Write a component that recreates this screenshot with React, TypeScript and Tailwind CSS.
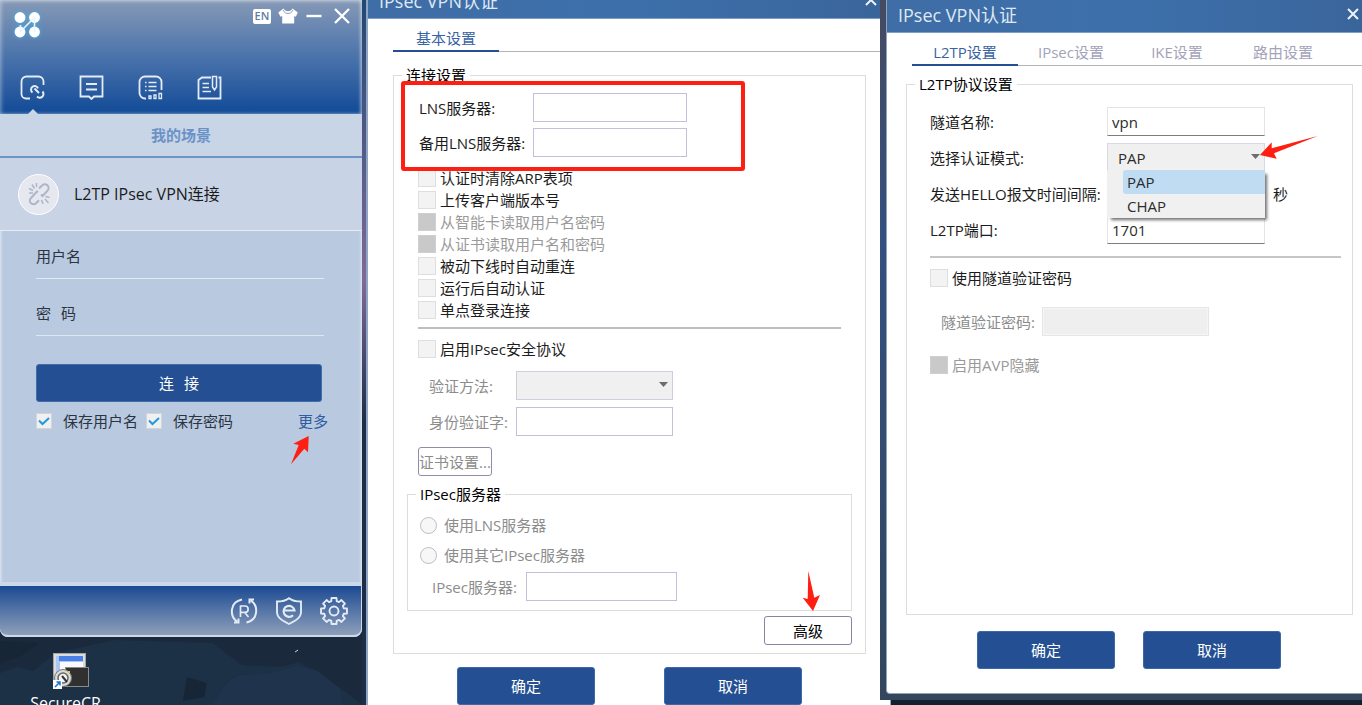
import { useId, type ReactNode } from 'react';

function Check({ label, disabled }: { label: string; disabled?: boolean }) {
  return (
    <label className={`flex h-[22px] items-center gap-1 ${disabled ? 'text-[#9a9a9a]' : 'text-[#1c1c1c]'}`}>
      <input
        type="checkbox"
        disabled={disabled}
        className="size-[18px] shrink-0 appearance-none border border-[#dedede] bg-[#f3f3f3] disabled:border-[#cfcfcf] disabled:bg-[#c9c9c9]"
      />
      {label}
    </label>
  );
}

function Field({
  label,
  labelClass,
  inputClass,
  value,
  disabled,
}: {
  label: string;
  labelClass: string;
  inputClass: string;
  value?: string;
  disabled?: boolean;
}) {
  const id = useId();
  return (
    <div className="flex h-[29px] items-center">
      <label htmlFor={id} className={`shrink-0 whitespace-nowrap ${labelClass}`}>
        {label}
      </label>
      <input id={id} type="text" defaultValue={value} disabled={disabled} className={`h-[29px] min-w-0 ${inputClass}`} />
    </div>
  );
}

function Group({ title, className, children }: { title: string; className: string; children: ReactNode }) {
  return (
    <fieldset className={`min-w-0 border border-[#dddddd] ${className}`}>
      <legend className="ml-2 px-1 leading-5 text-black">{title}</legend>
      {children}
    </fieldset>
  );
}

function TitleBar() {
  return (
    <div className="flex h-[33px] shrink-0 items-center justify-between border-b border-[#7f9fc6] bg-linear-to-r from-[#3f6da6] via-[#3d70ab] to-[#3a659b] pr-[3px] pl-[11px] text-[18px] leading-6 text-[#dfe8f3]">
      <h2 className="pb-0.5">IPsec VPN认证</h2>
      <button type="button" aria-label="关闭" className="pb-1">
        <svg width="12" height="12" viewBox="0 0 12 12" fill="none" stroke="#eef3f9" strokeWidth="2">
          <path d="M1 1l10 10M11 1L1 11" />
        </svg>
      </button>
    </div>
  );
}

function Tabs({ items }: { items: string[] }) {
  return (
    <div role="tablist" className="ml-[25px] flex h-[33px] shrink-0 shadow-[inset_0_-1px_0_#b4b4b4]">
      {items.map((t, i) => (
        <button
          key={t}
          type="button"
          role="tab"
          aria-selected={i === 0}
          className={`w-[106px] border-b-2 pt-1.5 text-center leading-5 ${
            i === 0 ? 'border-[#244f92] text-[#3a63a3]' : 'border-transparent text-[#a3a3bb]'
          }`}
        >
          {t}
        </button>
      ))}
    </div>
  );
}

function Primary({ children }: { children: ReactNode }) {
  return (
    <button
      type="button"
      className="h-[38px] w-[138px] shrink-0 rounded-[3px] border border-[#3c69a8] bg-[#244f92] text-white"
    >
      {children}
    </button>
  );
}

function Caret() {
  return (
    <svg width="9" height="5" viewBox="0 0 9 5" className="pointer-events-none absolute top-[11px] right-[5px]">
      <path d="M0 0h9L4.500 5z" fill="#6d6d6d" />
    </svg>
  );
}

function Logo() {
  return (
    <svg width="36" height="36" viewBox="0 0 36 36" className="drop-shadow-[0_0_2px_#43b5e8]">
      <g fill="#fff">
        <circle cx="11" cy="10.500" r="5.400" />
        <circle cx="25.500" cy="10.500" r="5.400" />
        <circle cx="11" cy="25" r="5.400" />
        <circle cx="25.500" cy="25" r="5.400" />
      </g>
      <path d="M11 25L25.500 10.500V25M11.500 25v-7" stroke="#e8f6fc" strokeWidth="1.500" fill="none" />
    </svg>
  );
}

const navIcons = [
  {
    name: '连接',
    body: (
      <>
        <path d="M10 23.500H6A4.500 4.500 0 0 1 1.500 19V6.500a5 5 0 0 1 5-5h12a5 5 0 0 1 5 5V10" />
        <path
          d="M12.500 17.500a3.600 3.600 0 1 1 5.500-4.200M14.500 13.500l4.500 4.500M22.500 16.500a3.600 3.600 0 1 1-5.500 5"
          strokeWidth="2"
        />
      </>
    ),
  },
  {
    name: '消息',
    body: <path d="M1.500 1.500h22v20h-8.500L12.500 24 10 21.500H1.500zM7 9h11M7 14.500h11" />,
  },
  {
    name: '统计',
    body: (
      <>
        <path d="M8 23.500H7A5.500 5.500 0 0 1 1.500 18V7A5.500 5.500 0 0 1 7 1.500h11A5.500 5.500 0 0 1 23.500 7v8" />
        <path d="M7 7.500h1.500M10.500 7.500h8M7 11.500h1.500M10.500 11.500h8M7 15.500h1.500M10.500 15.500h8" strokeWidth="1.400" />
        <path d="M11 21h2v2.500h-2zM16 20h2v3.500h-2zM21 18.500h2.500v5H21z" strokeWidth="1.300" />
      </>
    ),
  },
  {
    name: '日志',
    body: (
      <>
        <path d="M14 2.500H5L1.500 5v18.500h22V2.500h-2" />
        <path d="M15.500 1.500h4V12l-2 3-2-3zM5.500 8.500H12M5.500 12.500H12M5.500 16.500H14" strokeWidth="1.500" />
      </>
    ),
  },
];

function BrokenLink() {
  return (
    <span className="flex size-[41px] shrink-0 items-center justify-center rounded-full border border-white bg-[#e6e8f0]">
      <svg width="24" height="24" viewBox="0 0 24 24" fill="none" stroke="#aeb5c9" strokeWidth="2">
        <path d="M12 6.500l3-3a3.700 3.700 0 0 1 5.500 5.200l-5 5.300-1.500-1.500M11 10l-1-.5-6 6.500a3.600 3.600 0 0 0 5 5.300l3-3" />
        <path d="M5 2.500l2.500 4M9.500 1v4M2 6.500l4 2M2 11h4M14.500 18l1.500 4M18 17l3.500 4M18.500 14.500l4 1" strokeWidth="1.500" />
      </svg>
    </span>
  );
}

const gearPath = (() => {
  const pts: string[] = [];
  for (let i = 0; i < 8; i++) {
    const a = (i * Math.PI) / 4;
    for (const [d, r] of [
      [-0.27, 10.2],
      [-0.19, 13.2],
      [0.19, 13.2],
      [0.27, 10.2],
    ]) {
      pts.push(`${(14 + r * Math.sin(a + d)).toFixed(2)} ${(14 - r * Math.cos(a + d)).toFixed(2)}`);
    }
  }
  return `M${pts.join('L')}Z`;
})();

function SaveCheck({ label }: { label: string }) {
  return (
    <label className="flex items-center gap-[11px]">
      <span className="relative size-4 shrink-0">
        <input type="checkbox" defaultChecked className="block size-4 appearance-none border border-[#d5d5d5] bg-[#f0f0f0]" />
        <svg width="16" height="16" viewBox="0 0 16 16" className="pointer-events-none absolute top-0 left-0">
          <path d="M3 7.500l3.500 3.500L13 5" stroke="#1f9ae0" strokeWidth="2" fill="none" />
        </svg>
      </span>
      {label}
    </label>
  );
}

function Client() {
  return (
    <section className="flex min-h-0 flex-1 flex-col overflow-hidden rounded-b-lg bg-[#b9c9e0] shadow-[inset_0_0_3px_1px_#ffffffa0]">
      <header className="flex h-[114px] shrink-0 flex-col justify-between bg-linear-to-b from-[#8699b6] via-[#4a73ab] via-50% to-[#164e99] to-95% shadow-[inset_1px_1px_4px_#ffffff70,inset_-2px_0_3px_#ffffff60]">
        <div className="flex items-start justify-between pt-[7px] pr-3 pl-[9px]">
          <Logo />
          <div className="flex items-center gap-[7px]">
            <button
              type="button"
              className="flex h-[15px] w-[18px] items-center justify-center rounded-[2px] bg-white text-[11px] leading-3 font-semibold text-[#5f7da8]"
            >
              EN
            </button>
            <button type="button" aria-label="皮肤">
              <svg width="20" height="16" viewBox="0 0 20 16">
                <path
                  d="M5.500.5L.3 4.500l2.200 4.200 1.700-.8V15.500h12V7.900l1.600.8 2-4.200L14.500.5c-1 2-2.500 2.700-4.500 2.700S6.500 2.500 5.500.5z"
                  fill="#fff"
                />
                <path d="M5 2c1.300 2.600 3 3.500 5 3.500S13.700 4.600 15 2" fill="none" stroke="#8a9cb9" />
              </svg>
            </button>
            <button type="button" aria-label="最小化">
              <svg width="18" height="18" viewBox="0 0 18 18">
                <path d="M1.500 9h15" stroke="#fff" strokeWidth="2.400" />
              </svg>
            </button>
            <button type="button" aria-label="关闭" className="pl-1">
              <svg width="16" height="16" viewBox="0 0 16 16">
                <path d="M1 1l14 14M15 1L1 15" stroke="#fff" strokeWidth="2.300" />
              </svg>
            </button>
          </div>
        </div>
        <nav className="flex gap-[34px] pl-5">
          {navIcons.map((n, i) => (
            <button key={n.name} type="button" aria-label={n.name} className="flex h-[39px] flex-col items-center justify-between">
              <svg width="25" height="25" viewBox="0 0 25 25" fill="none" stroke="#e4ecf6" strokeWidth="1.800">
                {n.body}
              </svg>
              {i === 0 && (
                <svg width="10" height="5" viewBox="0 0 10 5">
                  <path d="M5 0l5 5H0z" fill="#c8d6e6" />
                </svg>
              )}
            </button>
          ))}
        </nav>
      </header>

      <div className="flex h-[44px] shrink-0 items-center justify-center border-b-2 border-[#6a95c6] bg-[#c8d5e6] font-bold text-[#6a92c6]">
        我的场景
      </div>
      <div className="flex h-[73px] shrink-0 items-center gap-[15px] border-b border-[#e6ecf4] bg-[#c8d4e6] pl-[18px] text-base text-[#1c1c1c]">
        <BrokenLink />
        L2TP IPsec VPN连接
      </div>

      <form className="flex-1 pr-[34px] pl-9 text-[#2b3442]" onSubmit={(e) => e.preventDefault()}>
        <div className="mr-1 flex h-12 items-end border-b border-[#e2e9f3] pb-3">
          <label htmlFor="user" className="w-16 leading-5">
            用户名
          </label>
          <input id="user" className="h-5 min-w-0 flex-1 outline-none" />
        </div>
        <div className="mr-1 flex h-[57px] items-end border-b border-[#dde6f1] pb-3">
          <label htmlFor="pass" className="flex w-16 gap-2.5 leading-5">
            <span>密</span>
            <span>码</span>
          </label>
          <input id="pass" type="password" className="h-5 min-w-0 flex-1 outline-none" />
        </div>
        <button
          type="submit"
          className="mt-7 flex h-[38px] w-[286px] items-center justify-center gap-2.5 rounded-[3px] border border-[#3f6dab] bg-[#244f92] text-white"
        >
          <span>连</span>
          <span>接</span>
        </button>
        <div className="mt-[7px] flex items-center leading-6">
          <SaveCheck label="保存用户名" />
          <div className="ml-2">
            <SaveCheck label="保存密码" />
          </div>
          <a href="#more" className="relative ml-auto text-[#2f5ba0]">
            更多
            <svg width="20" height="30" viewBox="0 0 20 30" className="absolute top-[26px] -left-2">
              <path d="M18.700 1L3.300 8.700 8.700 10 1 29.300 14.300 13.700 18 17.300z" fill="#ff1f12" />
            </svg>
          </a>
        </div>
      </form>

      <footer className="flex h-[55px] shrink-0 items-center justify-end gap-[17px] rounded-b-lg border-t-4 border-r border-b-2 border-[#ccd9e9] bg-linear-to-b from-[#1a4a92] to-[#8e9fb9] pr-[13px]">
        <button type="button" aria-label="重连">
          <svg width="28" height="28" viewBox="0 0 28 28" fill="none" stroke="#e4ebf5" strokeWidth="2">
            <path d="M12 2.500C-.5 5-.5 19 7 24.500M4 25.500h4.500v-4M16.500 25.500C28.500 23 28.500 9 21 3.500M24 2.500h-4.500v4" />
            <path d="M10.500 20V9h4.500a3 3 0 0 1 0 6.300h-4.500M14.500 15.300l4 4.700" strokeWidth="1.700" />
          </svg>
        </button>
        <button type="button" aria-label="安全">
          <svg width="28" height="28" viewBox="0 0 28 28" fill="none" stroke="#e4ebf5" strokeWidth="1.900">
            <path d="M14 1.200C10.500 4 6.500 4.500 2 4.500V15c0 6 6 9 12 12 6-3 12-6 12-12V4.500C21.500 4.500 17.500 4 14 1.200z" />
            <path d="M9 13.500h10.500a5.500 5.500 0 1 0-1.500 4.800" strokeWidth="2.200" />
          </svg>
        </button>
        <button type="button" aria-label="设置">
          <svg width="28" height="28" viewBox="0 0 28 28" fill="none" stroke="#e4ebf5" strokeWidth="1.900" strokeLinejoin="round">
            <path d={gearPath} />
            <circle cx="14" cy="14" r="4.500" />
          </svg>
        </button>
      </footer>
    </section>
  );
}

function Desktop() {
  return (
    <div className="relative h-[68px] shrink-0 overflow-hidden">
      <svg viewBox="0 0 368 68" preserveAspectRatio="none" className="absolute inset-0 h-full w-full">
        <path d="M0 36l18-6 16 4 22-18 60-13 100 3 30 22 40 2 18-5 26 16 22 14 16 13H0z" fill="#1c3046" />
        <path d="M190 40l20 6-2 14-22 4zM0 4l40 2-20 14-20 6z" fill="#172637" />
        <path d="M220 62q14-26 30-24l26-2 24-6q20 0 28 8l18 14 2 16H215z" fill="#1f344c" />
        <path d="M300 15l3-2" stroke="#cfd8e2" />
      </svg>
      <div className="relative flex w-[131px] flex-col items-center pt-[15px] text-white">
        <svg width="38" height="38" viewBox="0 0 38 38" className="ml-[11px]">
          <rect x="1.500" y="1.500" width="32" height="30" fill="#dcdcdc" stroke="#a5a5a5" />
          <rect x="4" y="4" width="27" height="24" fill="#a9c8f5" />
          <rect x="7" y="4" width="24" height="5" fill="#4a7fe8" />
          <rect x="8" y="10" width="23" height="10" fill="#fafafa" />
          <rect x="13.500" y="15.500" width="23" height="19" fill="#303030" stroke="#8b8b8b" />
          <circle cx="11" cy="26" r="8.500" fill="#dadada" stroke="#777" />
          <circle cx="11" cy="26" r="5" fill="#f4f4f4" stroke="#666" strokeWidth="1.500" />
          <path d="M10 24l5 6" stroke="#333" strokeWidth="2" />
          <rect x="16" y="19" width="2" height="2" fill="#d7d321" />
          <rect x="1" y="28" width="9" height="9" fill="#fff" />
          <path d="M3 35l5-5M4.500 30H8v3.500" stroke="#1477cf" strokeWidth="1.500" fill="none" />
        </svg>
        <span className="mt-[3px] text-base leading-5">SecureCR</span>
      </div>
    </div>
  );
}

const loginOptions = [
  { label: '认证时清除ARP表项' },
  { label: '上传客户端版本号' },
  { label: '从智能卡读取用户名密码', disabled: true },
  { label: '从证书读取用户名和密码', disabled: true },
  { label: '被动下线时自动重连' },
  { label: '运行后自动认证' },
  { label: '单点登录连接' },
];

function BasicDialog() {
  const box = 'border border-[#c6bfdb] bg-white px-1';
  return (
    <section className="-mt-3.5 bg-white">
      <TitleBar />
      <Tabs items={['基本设置']} />
      <Group title="连接设置" className="relative mt-[13px] mr-[14px] ml-[25px] pb-2">
        <div className="absolute -top-1 left-[7px] h-[90px] w-[344px] rounded-[3px] border-4 border-[#ff1f12]" />
        <div className="px-6 pt-2 text-[#1c1c1c]">
          <div className="flex flex-col gap-1.5">
            <Field label="LNS服务器:" labelClass="w-[115px] pl-px" inputClass={`w-[154px] ${box}`} />
            <Field label="备用LNS服务器:" labelClass="w-[115px] pl-px" inputClass={`w-[154px] ${box}`} />
          </div>
          <div className="mt-2.5">
            {loginOptions.map((o) => (
              <Check key={o.label} {...o} />
            ))}
          </div>
          <hr className="mt-1.5 border-t-2 border-[#bebebe]" />
          <div className="mt-[9px]">
            <Check label="启用IPsec安全协议" />
          </div>
          <div className="mt-[11px] flex flex-col gap-[7px] text-[#8c8c8c]">
            <div className="flex h-[29px] items-center">
              <label htmlFor="method" className="w-[98px] pl-[11px]">
                验证方法:
              </label>
              <div className="relative">
                <select
                  id="method"
                  disabled
                  className="block h-[29px] w-[157px] appearance-none border border-[#cfcde0] bg-[#f0f0f0]"
                />
                <Caret />
              </div>
            </div>
            <Field label="身份验证字:" labelClass="w-[98px] pl-[11px]" inputClass={`w-[157px] ${box}`} />
          </div>
          <button
            type="button"
            className="mt-[11px] block h-[29px] w-[74px] rounded-[3px] border border-[#8e8ea8] whitespace-nowrap text-[#8c8c8c]"
          >
            证书设置...
          </button>
        </div>
        <Group title="IPsec服务器" className="mx-[13px] mt-2 pb-[9px] text-[#8c8c8c]">
          <div className="pt-1.5 pl-3">
            {['使用LNS服务器', '使用其它IPsec服务器'].map((r) => (
              <label key={r} className="flex h-[30px] items-center gap-[7px]">
                <input type="radio" name="server" className="size-[17px] appearance-none rounded-full border border-[#bdbdbd] bg-[#f7f7f7]" />
                {r}
              </label>
            ))}
          </div>
          <div className="pt-0.5">
            <Field label="IPsec服务器:" labelClass="w-[118px] pl-6" inputClass={`w-[151px] ${box}`} />
          </div>
        </Group>
        <div className="mt-[5px] mr-[13px] flex justify-end">
          <button type="button" className="relative h-[29px] w-[88px] rounded-[3px] border border-[#8686a2] text-black">
            高级
            <svg width="20" height="42" viewBox="0 0 20 42" className="absolute -top-[47px] left-9">
              <path d="M7.300 1L6.700 29 1.700 27.700 12 41 19 25 13.300 27.700z" fill="#ff1f12" />
            </svg>
          </button>
        </div>
      </Group>
      <div className="mt-[13px] flex justify-center gap-[69px] pb-4 pl-[11px]">
        <Primary>确定</Primary>
        <Primary>取消</Primary>
      </div>
    </section>
  );
}

function AdvancedDialog() {
  const box = 'w-[158px] border border-[#e4e4e4] border-b-[#7e7e7e] bg-white px-1 text-[#2c2c2c]';
  return (
    <section className="flex min-h-0 flex-1 flex-col rounded-bl-[4px] border-b border-l border-[#8fa3be] bg-white">
      <TitleBar />
      <Tabs items={['L2TP设置', 'IPsec设置', 'IKE设置', '路由设置']} />
      <Group title="L2TP协议设置" className="mt-2 mr-[9px] ml-[19px] flex-1">
        <div className="pt-[13px] pr-[11px] pl-[23px] text-[#1c1c1c]">
          <div className="flex flex-col gap-[7px]">
            <Field label="隧道名称:" labelClass="w-[177px]" inputClass={box} value="vpn" />
            <div className="flex h-[29px] items-center">
              <label htmlFor="mode" className="w-[177px]">
                选择认证模式:
              </label>
              <div className="relative z-10">
                <select
                  id="mode"
                  defaultValue="PAP"
                  className="block h-[29px] w-[158px] appearance-none border border-[#d9d8e6] bg-[#f0f0f0] px-2.5 text-[#2c2c2c]"
                >
                  <option>PAP</option>
                  <option>CHAP</option>
                </select>
                <Caret />
                <ul
                  role="listbox"
                  aria-label="认证模式"
                  className="absolute top-[27px] left-0 w-[158px] bg-[#f0f0f0] pl-4 leading-6 text-[#2c2c2c] shadow-[3px_3px_3px_-1px_#00000090]"
                >
                  <li role="option" aria-selected="true" className="rounded-l-[3px] bg-[#c0dcf3] pl-1">
                    PAP
                  </li>
                  <li role="option" aria-selected="false" className="pl-1">
                    CHAP
                  </li>
                </ul>
                <svg width="60" height="26" viewBox="0 0 60 26" className="absolute -top-2 left-[152px]">
                  <path d="M58.700 1L12.700 13.300V7.300L1 20 17.700 23.700 15 18.300z" fill="#ff1f12" />
                </svg>
              </div>
            </div>
            <div className="flex items-center gap-2">
              <Field label="发送HELLO报文时间间隔:" labelClass="w-[177px]" inputClass={box} />
              <span>秒</span>
            </div>
            <Field label="L2TP端口:" labelClass="w-[177px]" inputClass={box} value="1701" />
          </div>
          <hr className="mt-3 border-t-2 border-[#c6c6c6]" />
          <div className="mt-[9px]">
            <Check label="使用隧道验证密码" />
          </div>
          <div className="mt-[18px] text-[#8c8c8c]">
            <Field
              label="隧道验证密码:"
              labelClass="w-[112px] pl-[11px]"
              inputClass="w-[167px] border-2 border-[#f5f5f5] bg-[#efefef] outline outline-[#e6e6e6] -outline-offset-1"
              disabled
            />
          </div>
          <div className="mt-[18px]">
            <Check label="启用AVP隐藏" disabled />
          </div>
        </div>
      </Group>
      <div className="mt-4 flex justify-center gap-7 pb-6 pl-[9px]">
        <Primary>确定</Primary>
        <Primary>取消</Primary>
      </div>
    </section>
  );
}

export default function App() {
  return (
    <main
      lang="zh-CN"
      className="grid h-screen min-h-[700px] grid-cols-[362px_minmax(0,518fr)_minmax(0,482fr)] overflow-hidden bg-[#1a2a3c] font-['Open_Sans','Noto_Sans_CJK_SC',sans-serif] text-[15px] leading-5"
    >
      <div className="flex min-h-0 flex-col">
        <Client />
        <Desktop />
      </div>
      <div className="min-h-0 overflow-hidden bg-linear-to-b from-[#1f4872] via-[#80699a] via-40% to-[#1c2d45] to-60% pl-1">
        <div className="border-l-2 border-[#8fa5c6]">
          <BasicDialog />
        </div>
      </div>
      <div className="flex min-h-0 flex-col">
        <div className="flex min-h-0 flex-1 bg-linear-to-b from-[#454a60] via-[#33507f] via-35% to-[#33465c] pb-1.5 pl-1.5">
          <AdvancedDialog />
        </div>
        <div className="flex h-[5px] shrink-0 bg-[#13202e]">
          <div className="w-[11px] border-r border-[#8fa3be] bg-white" />
        </div>
      </div>
    </main>
  );
}
